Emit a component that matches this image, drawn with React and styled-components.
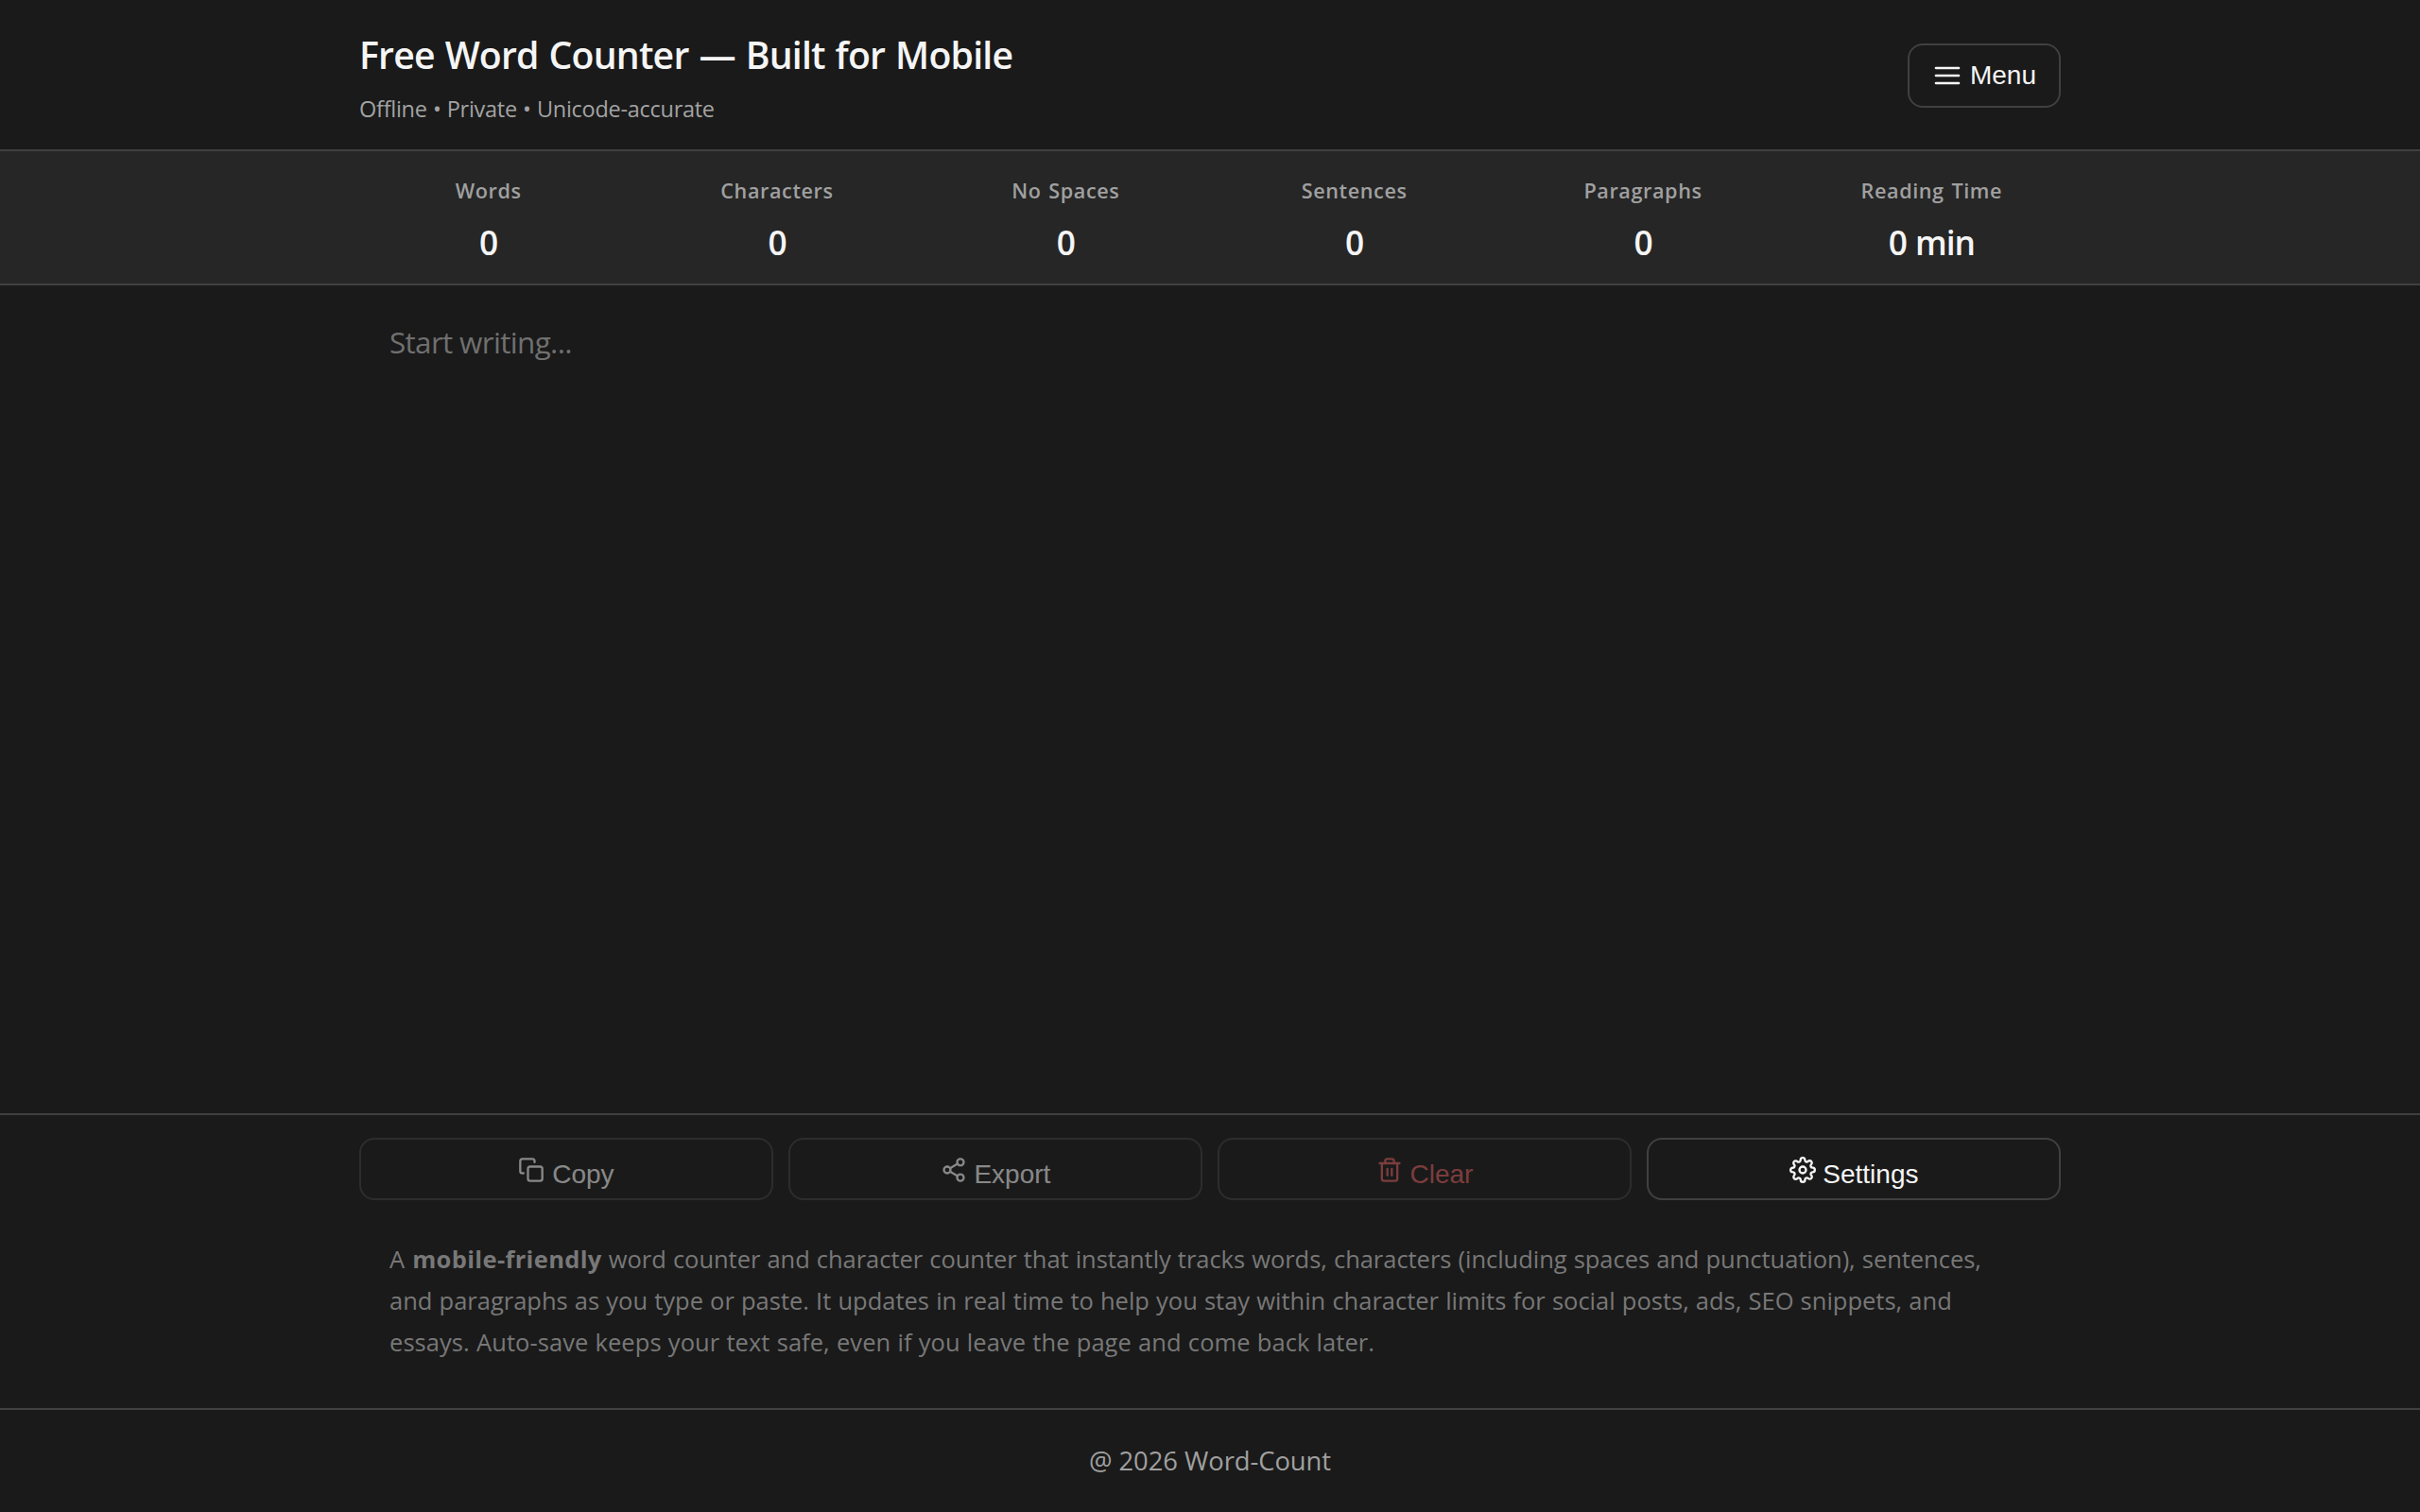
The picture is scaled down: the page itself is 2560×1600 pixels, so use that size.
import React, { useState } from 'react'
import styled, { createGlobalStyle } from 'styled-components'
import { FiCopy, FiMenu, FiSettings, FiShare2, FiTrash2 } from 'react-icons/fi'

const GlobalStyle = createGlobalStyle`
  * {
    box-sizing: border-box;
  }
  body {
    margin: 0;
    background: #1a1a1a;
    color: #f5f5f5;
    font-family: "Open Sans", "Noto Sans", sans-serif;
  }
`

const Page = styled.div`
  display: flex;
  flex-direction: column;
  height: 100vh;
`

const Container = styled.div`
  width: 1800px;
  margin: 0 auto;
`

const Header = styled.header`
  height: 160px;
  border-bottom: 2px solid #404040;
`

const HeaderInner = styled(Container)`
  display: flex;
  justify-content: space-between;
  align-items: flex-start;
`

const Brand = styled.div`
  padding-top: 33px;
`

const Title = styled.h1`
  margin: 0;
  font-size: 39.2px;
  font-weight: 600;
  line-height: 50px;
  letter-spacing: -0.8px;
  word-spacing: 1.5px;
`

const Tagline = styled.p`
  margin: 14px 0 0;
  font-size: 23.5px;
  line-height: 36px;
  letter-spacing: -0.27px;
  word-spacing: 0.4px;
  color: #a3a3a3;
`

const Button = styled.button`
  display: flex;
  justify-content: center;
  border: 2px solid #404040;
  border-radius: 16px;
  background: transparent;
  color: ${(p) => (p.$danger ? '#dc6060' : '#f5f5f5')};
  font-family: "Liberation Sans", Arial, sans-serif;
  font-size: 28px;
  line-height: 32px;
  opacity: ${(p) => (p.disabled ? 0.5 : 1)};
`

const MenuButton = styled(Button)`
  height: 68px;
  margin-top: 46px;
  padding: 0 24px;
  align-items: center;
  gap: 8px;
`

const ActionButton = styled(Button)`
  height: 66px;
  padding: 18px 0 0;
  align-items: baseline;
  gap: 7.8px;
`

const Stats = styled.section`
  height: 142px;
  padding-top: 25px;
  background: #262626;
  border-bottom: 2px solid #404040;
`

const StatsGrid = styled(Container)`
  display: grid;
  grid-template-columns: repeat(6, 1fr);
  gap: 32px;
  text-align: center;
`

const StatLabel = styled.div`
  font-size: 21.6px;
  font-weight: 600;
  line-height: 34px;
  letter-spacing: 0.6px;
  word-spacing: 1.5px;
  color: #a0a0a0;
`

const StatValue = styled.div`
  margin-top: 15px;
  font-size: 35.3px;
  font-weight: 600;
  line-height: 44px;
  letter-spacing: -1px;
  word-spacing: 1px;
`

const Editor = styled(Container)`
  flex: 1;
  display: flex;
`

const TextArea = styled.textarea`
  flex: 1;
  padding: 33px 32px 32px;
  border: 0;
  outline: 0;
  resize: none;
  background: transparent;
  color: #f5f5f5;
  font-family: inherit;
  font-size: 31.4px;
  line-height: 54px;
  letter-spacing: -0.65px;

  &::placeholder {
    color: #707070;
    opacity: 1;
  }
`

const Toolbar = styled.section`
  height: 312px;
  padding-top: 24px;
  border-top: 2px solid #404040;
`

const Actions = styled(Container)`
  display: grid;
  grid-template-columns: repeat(4, 1fr);
  gap: 16px;
`

const About = styled(Container)`
  padding: 40px 32px 0;
  font-size: 25.5px;
  line-height: 44.2px;
  word-spacing: 0.5px;
  white-space: nowrap;
  color: #787878;

  strong {
    margin-left: 1px;
    font-weight: 700;
    letter-spacing: 0.35px;
  }
`

const Line = styled.div`
  letter-spacing: ${(p) => p.$tracking};
`

const Footer = styled.footer`
  height: 110px;
  border-top: 2px solid #404040;
  font-size: 27.4px;
  line-height: 107px;
  letter-spacing: -0.06px;
  text-align: center;
  color: #a0a0a0;
`

const App = () => {
  const [text, setText] = useState('')
  const empty = text.trim() === ''
  const words = empty ? 0 : text.trim().split(/\s+/).length

  const stats = [
    ['Words', words],
    ['Characters', text.length],
    ['No Spaces', text.replace(/\s/g, '').length],
    ['Sentences', (text.match(/[^.!?]+[.!?]+/g) || []).length],
    ['Paragraphs', empty ? 0 : text.trim().split(/\n+/).length],
    ['Reading Time', `${Math.ceil(words / 200)} min`],
  ]

  return (
    <>
      <GlobalStyle />
      <Page>
        <Header>
          <HeaderInner>
            <Brand>
              <Title>Free Word Counter — Built for Mobile</Title>
              <Tagline>Offline • Private • Unicode-accurate</Tagline>
            </Brand>
            <MenuButton>
              <FiMenu size={32} />
              Menu
            </MenuButton>
          </HeaderInner>
        </Header>

        <Stats>
          <StatsGrid>
            {stats.map(([label, value]) => (
              <div key={label}>
                <StatLabel>{label}</StatLabel>
                <StatValue>{value}</StatValue>
              </div>
            ))}
          </StatsGrid>
        </Stats>

        <Editor>
          <TextArea
            placeholder="Start writing..."
            value={text}
            onChange={(e) => setText(e.target.value)}
          />
        </Editor>

        <Toolbar>
          <Actions>
            <ActionButton disabled={empty}>
              <FiCopy size={28} />
              Copy
            </ActionButton>
            <ActionButton disabled={empty}>
              <FiShare2 size={28} />
              Export
            </ActionButton>
            <ActionButton $danger disabled={empty}>
              <FiTrash2 size={28} />
              Clear
            </ActionButton>
            <ActionButton>
              <FiSettings size={28} />
              Settings
            </ActionButton>
          </Actions>
          <About>
            <Line $tracking="-0.035px">
              A <strong>mobile-friendly</strong> word counter and character counter that instantly
              tracks words, characters (including spaces and punctuation), sentences,
            </Line>
            <Line $tracking="0px">
              and paragraphs as you type or paste. It updates in real time to help you stay within
              character limits for social posts, ads, SEO snippets, and
            </Line>
            <Line $tracking="0.06px">
              essays. Auto-save keeps your text safe, even if you leave the page and come back later.
            </Line>
          </About>
        </Toolbar>

        <Footer>@ 2026 Word-Count</Footer>
      </Page>
    </>
  )
}

export default App
